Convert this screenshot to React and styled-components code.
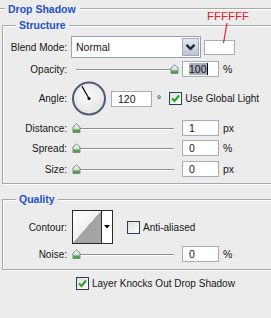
import React from "react";
import styled, { createGlobalStyle } from "styled-components";

const Global = createGlobalStyle`
  html, body { margin: 0; padding: 0; background: #ECECEC; }
  body {
    font-family: "Liberation Sans", Arial, sans-serif;
    font-size: 10px;
    color: #161616;
  }
`;

const Page = styled.div`
  position: relative;
  width: 271px;
  height: 318px;
  overflow: hidden;
  background: #ECECEC;
`;

const TitleRow = styled.div`
  display: flex;
  align-items: center;
  height: 17px;
`;

const Rule = styled.div`
  height: 1px;
  background: #A9A9A9;
  box-shadow: 0 1px 0 #fff;
  flex: ${(p) => (p.$w ? `0 0 ${p.$w}px` : "1 1 auto")};
`;

const TitleText = styled.div`
  padding: 0 4px 0 3px;
  font-weight: bold;
  font-size: 10.5px;
  color: #2452C8;
  white-space: nowrap;
`;

const Group = styled.section`
  margin: ${(p) => p.$top}px 0 0 2px;
  border: 1px solid #A6A6A6;
  border-right: none;
  box-shadow: inset 1px 1px 0 #fff, 0 1px 0 #fff;
  padding-bottom: ${(p) => p.$bottom}px;
`;

const Legend = styled.div`
  width: fit-content;
  margin: -8px 0 0 13px;
  padding: 0 3px;
  height: 14px;
  line-height: 14px;
  background: #ECECEC;
  font-weight: bold;
  font-size: 10.5px;
  color: #2452C8;
`;

const Row = styled.div`
  display: flex;
  align-items: center;
  height: ${(p) => p.$h}px;
  margin-top: ${(p) => p.$mt}px;
  padding-left: ${(p) => p.$pl || 0}px;
`;

const Label = styled.div`
  flex: 0 0 64px;
  text-align: right;
  margin-right: 5px;
  white-space: nowrap;
`;

const Select = styled.div`
  box-sizing: border-box;
  display: flex;
  align-items: center;
  width: 130px;
  height: 22px;
  margin-left: -1px;
  padding: 1px;
  background: #fff;
  border: 1px solid #8FA1BC;
`;

const SelectText = styled.div`
  flex: 1;
  padding-left: 3px;
  font-size: 10.5px;
`;

const DropButton = styled.div`
  box-sizing: border-box;
  width: 17px;
  height: 18px;
  display: flex;
  align-items: center;
  justify-content: center;
  border: 1px solid #A3AABA;
  background: linear-gradient(#E4E7EE, #BFC5D2);
`;

const Swatch = styled.div`
  box-sizing: border-box;
  width: 31px;
  height: 15px;
  margin-left: 3px;
  background: #fff;
  border: 1px solid #A5ACB5;
`;

const Slider = styled.div`
  position: relative;
  display: flex;
  align-items: center;
  width: 106px;
  height: 12px;
  flex-shrink: 0;
`;

const Track = styled.div`
  flex: 1;
  margin: 0 4px;
  height: 1px;
  background: #8E8E8E;
  box-shadow: 0 1px 0 #fff;
`;

const ThumbWrap = styled.div`
  position: absolute;
  top: 1px;
  width: 9px;
  height: 10px;
`;

const Input = styled.div`
  box-sizing: border-box;
  width: ${(p) => p.$w || 37}px;
  height: 16px;
  margin-left: ${(p) => p.$ml || 4}px;
  padding-left: 6px;
  line-height: 14px;
  background: #fff;
  border: 1px solid #A5ACB5;
  font-size: 10.5px;
  flex-shrink: 0;
`;

const Selected = styled.span`
  background: #A9AEBB;
  border-right: 1px solid #000;
`;

const Unit = styled.div`
  margin-left: ${(p) => p.$ml || 4}px;
  font-size: 10.5px;
`;

const CheckText = styled.div`
  margin-left: 3px;
  white-space: nowrap;
  font-size: 10px;
`;

const BoxCheck = styled.div`
  box-sizing: border-box;
  width: 13px;
  height: 13px;
  margin-left: ${(p) => p.$ml || 0}px;
  flex-shrink: 0;
  border: 1px solid #2A3E5E;
  background: linear-gradient(135deg, #DCDCD8, #FFFFFF);
  display: flex;
  align-items: center;
  justify-content: center;
`;

const ContourBox = styled.div`
  box-sizing: border-box;
  display: flex;
  width: 41px;
  height: 34px;
  border: 1px solid #2A2A2A;
  background: #fff;
`;

const ContourPreview = styled.div`
  flex: 1;
  background: linear-gradient(to bottom right, #FFFFFF 0%, #F1F1F1 49.5%, #A4A4A4 50.5%, #A4A4A4 100%);
  border-right: 1px solid #2A2A2A;
`;

const ContourArrow = styled.div`
  width: 10px;
  display: flex;
  align-items: center;
  justify-content: center;
`;

const Annotation = styled.div`
  position: absolute;
  left: 207px;
  top: 10px;
  color: #E3202A;
  font-size: 11.5px;
`;

const Leader = styled.svg`
  position: absolute;
  left: 218px;
  top: 22px;
`;

const Thumb = ({ value }) => (
  <ThumbWrap style={{ left: `${(value / 100) * 98}px` }}>
    <svg width="9" height="10" viewBox="0 0 9 10">
      <defs>
        <linearGradient id="tg" x1="0" y1="0" x2="0" y2="1">
          <stop offset="0" stopColor="#F6F6F6" />
          <stop offset="0.55" stopColor="#D9E2D9" />
          <stop offset="0.7" stopColor="#5DAE5D" />
          <stop offset="1" stopColor="#3E8E3E" />
        </linearGradient>
      </defs>
      <path d="M1 9.5 V4 L4.5 0.8 L8 4 V9.5 Z" fill="url(#tg)" stroke="#7D8F7D" strokeWidth="1" />
    </svg>
  </ThumbWrap>
);

const SliderControl = ({ value }) => (
  <Slider>
    <Track />
    <Thumb value={value} />
  </Slider>
);

const Check = ({ checked, ml }) => (
  <BoxCheck $ml={ml}>
    {checked && (
      <svg width="9" height="9" viewBox="0 0 9 9">
        <path d="M1 4.5 L3.5 7 L8 1.5" fill="none" stroke="#1FA31F" strokeWidth="2" />
      </svg>
    )}
  </BoxCheck>
);

const Dial = ({ angle }) => {
  const r = (angle * Math.PI) / 180;
  const x = 17 + Math.cos(r) * 14;
  const y = 17 - Math.sin(r) * 14;
  return (
    <svg width="35" height="35" viewBox="0 0 35 35" style={{ flexShrink: 0 }}>
      <defs>
        <radialGradient id="dg" cx="0.45" cy="0.4" r="0.6">
          <stop offset="0" stopColor="#FAFAFA" />
          <stop offset="1" stopColor="#E4E4E4" />
        </radialGradient>
      </defs>
      <circle cx="17" cy="17.5" r="16" fill="url(#dg)" stroke="#4E5A78" strokeWidth="2" />
      <line x1="17" y1="17.5" x2={x} y2={y + 0.5} stroke="#000" strokeWidth="1.2" />
      <circle cx="17" cy="17.5" r="1.5" fill="#000" />
    </svg>
  );
};

const SliderRow = ({ label, value, text, unit, mt }) => (
  <Row $h={16} $mt={mt}>
    <Label>{label}</Label>
    <SliderControl value={value} />
    <Input>{text}</Input>
    <Unit>{unit}</Unit>
  </Row>
);

export default function App() {
  return (
    <Page>
      <Global />
      <TitleRow>
        <Rule $w={5} />
        <TitleText>Drop Shadow</TitleText>
        <Rule />
      </TitleRow>

      <Group $top={8} $bottom={6}>
        <Legend>Structure</Legend>
        <Row $h={22} $mt={4}>
          <Label>Blend Mode:</Label>
          <Select>
            <SelectText>Normal</SelectText>
            <DropButton>
              <svg width="11" height="8" viewBox="0 0 11 8">
                <path d="M1.5 1.8 L5.5 5.8 L9.5 1.8" fill="none" stroke="#1E2A44" strokeWidth="2.4" />
              </svg>
            </DropButton>
          </Select>
          <Swatch />
        </Row>
        <Row $h={16} $mt={3}>
          <Label>Opacity:</Label>
          <SliderControl value={100} />
          <Input>
            <Selected>100</Selected>
          </Input>
          <Unit>%</Unit>
        </Row>
        <Row $h={35} $mt={4}>
          <Label>Angle:</Label>
          <Dial angle={120} />
          <Input $w={41} $ml={4}>120</Input>
          <Unit $ml={5}>°</Unit>
          <Check checked ml={8} />
          <CheckText>Use Global Light</CheckText>
        </Row>
        <SliderRow label="Distance:" value={0} text="1" unit="px" mt={4} />
        <SliderRow label="Spread:" value={0} text="0" unit="%" mt={4} />
        <SliderRow label="Size:" value={0} text="0" unit="px" mt={5} />
      </Group>

      <Group $top={15} $bottom={7}>
        <Legend>Quality</Legend>
        <Row $h={34} $mt={4}>
          <Label>Contour:</Label>
          <ContourBox>
            <ContourPreview />
            <ContourArrow>
              <svg width="6" height="4" viewBox="0 0 6 4">
                <path d="M0 0 H6 L3 3.5 Z" fill="#000" />
              </svg>
            </ContourArrow>
          </ContourBox>
          <Check ml={14} />
          <CheckText>Anti-aliased</CheckText>
        </Row>
        <SliderRow label="Noise:" value={0} text="0" unit="%" mt={2} />
      </Group>

      <Row $h={13} $mt={7} $pl={76}>
        <Check checked />
        <CheckText>Layer Knocks Out Drop Shadow</CheckText>
      </Row>

      <Annotation>FFFFFF</Annotation>
      <Leader width="12" height="24" viewBox="0 0 12 24">
        <line x1="9" y1="1" x2="5.5" y2="21" stroke="#E3202A" strokeWidth="1.2" />
      </Leader>
    </Page>
  );
}
